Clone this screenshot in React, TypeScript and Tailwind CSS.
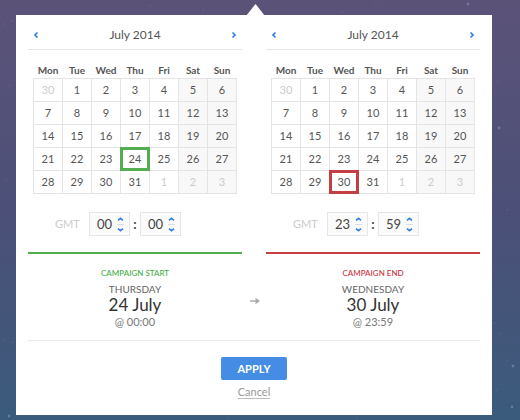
import { useState } from "react";

type Tone = "start" | "end";

const WEEKDAYS = ["Mon", "Tue", "Wed", "Thu", "Fri", "Sat", "Sun"];

// Day 0 stands for the last day of June, days above 31 fall in August.
const WEEKS = [0, 1, 2, 3, 4].map((week) => WEEKDAYS.map((_, day) => week * 7 + day));

const STARS = [
  [4, 24, 1], [12, 21, 1], [203, 10, 1], [150, 6, 1], [342, 12, 1], [376, 6, 1], [468, 4, 2],
  [498, 82, 1], [499, 128, 2], [10, 86, 1], [6, 180, 1], [507, 210, 1], [494, 323, 1],
  [500, 334, 1], [507, 361, 1], [513, 366, 2], [497, 390, 1], [512, 407, 2], [9, 416, 2],
  [4, 340, 1], [357, 417, 1], [228, 418, 1], [13, 342, 1],
];

function dayLabel(day: number) {
  if (day < 1) return 30;
  return day > 31 ? day - 31 : day;
}

function Chevron({ className, path }: { className: string; path: string }) {
  return (
    <svg viewBox="0 0 6 8" className={className} fill="none" stroke="#2f80e8" strokeWidth="1.7" aria-hidden="true">
      <path d={path} />
    </svg>
  );
}

function MonthHeader() {
  return (
    <div className="flex h-[35px] items-center justify-between border-b border-[#e6e6e6] px-[5px] pt-[6px]">
      <button type="button" aria-label="Previous month" className="flex">
        <Chevron className="h-2 w-[6px]" path="M4.500 1.500 2 4l2.500 2.500" />
      </button>
      <h2 className="text-[12px] leading-4 text-[#555]">July 2014</h2>
      <button type="button" aria-label="Next month" className="flex">
        <Chevron className="h-2 w-[6px]" path="M1.500 1.500 4 4 1.500 6.500" />
      </button>
    </div>
  );
}

function MonthTable({ tone, selected, onSelect }: { tone: Tone; selected: number; onSelect: (day: number) => void }) {
  const ring = tone === "start" ? "outline-[#52ae50]" : "outline-[#c43f42]";
  return (
    <div className="px-[5px] pt-3">
      <table className="w-full table-fixed border-collapse text-center">
        <thead>
          <tr>
            {WEEKDAYS.map((name) => (
              <th key={name} scope="col" className="h-4 p-0 text-[10px] leading-4 font-bold text-[#555]">
                {name}
              </th>
            ))}
          </tr>
        </thead>
        <tbody>
          {WEEKS.map((week, row) => (
            <tr key={row}>
              {week.map((day, column) => (
                <td key={day} className={`h-[23px] border border-[#e4e4e4] p-0 ${column > 4 ? "bg-[#f8f8f8]" : ""}`}>
                  <button
                    type="button"
                    onClick={() => onSelect(day)}
                    className={`block h-[22px] w-full text-[11px] leading-[22px] ${
                      day < 1 || day > 31 ? "text-[#ccc]" : "text-[#555]"
                    } ${day === selected ? `outline-3 -outline-offset-2 outline-solid ${ring}` : ""}`}
                  >
                    {dayLabel(day)}
                  </button>
                </td>
              ))}
            </tr>
          ))}
        </tbody>
      </table>
    </div>
  );
}

function Stepper({ label, value, max, onChange }: { label: string; value: number; max: number; onChange: (value: number) => void }) {
  const size = max + 1;
  return (
    <div className="flex h-6 w-[41px] items-center border border-[#e6e6e6] bg-[#fbfbfb] pr-[5px]">
      <input
        type="text"
        aria-label={label}
        value={String(value).padStart(2, "0")}
        onChange={(event) => onChange((Number(event.target.value) || 0) % size)}
        className="w-0 min-w-0 flex-1 bg-transparent pl-[7px] text-[13px] leading-5 text-[#444] outline-none"
      />
      <div className="flex w-[7px] flex-col items-center gap-[3px]">
        <button type="button" aria-label={`${label} up`} className="flex" onClick={() => onChange((value + 1) % size)}>
          <svg viewBox="0 0 7 4" className="h-1 w-[7px]" fill="none" stroke="#2f80e8" strokeWidth="1.6" aria-hidden="true">
            <path d="M1 3.300 3.500 1.300 6 3.300" />
          </svg>
        </button>
        <span className="h-px w-[7px] bg-[#dedede]" />
        <button type="button" aria-label={`${label} down`} className="flex" onClick={() => onChange((value + size - 1) % size)}>
          <svg viewBox="0 0 7 4" className="h-1 w-[7px]" fill="none" stroke="#2f80e8" strokeWidth="1.6" aria-hidden="true">
            <path d="M1 .7 3.500 2.700 6 .7" />
          </svg>
        </button>
      </div>
    </div>
  );
}

function TimeRow({ name, hours, minutes, onHours, onMinutes }: {
  name: string;
  hours: number;
  minutes: number;
  onHours: (value: number) => void;
  onMinutes: (value: number) => void;
}) {
  return (
    <div className="flex items-center pt-[18px] pb-4 pl-[27px]">
      <span className="w-[34px] text-[11px] leading-4 text-[#ccc]">GMT</span>
      <Stepper label={`${name} hours`} value={hours} max={23} onChange={onHours} />
      <span className="w-[10px] text-center text-[13px] leading-4 font-bold text-[#444]">:</span>
      <Stepper label={`${name} minutes`} value={minutes} max={59} onChange={onMinutes} />
    </div>
  );
}

const NAMES = ["MONDAY", "TUESDAY", "WEDNESDAY", "THURSDAY", "FRIDAY", "SATURDAY", "SUNDAY"];

function DatePanel({ tone, title, initialDay, initialHours, initialMinutes }: {
  tone: Tone;
  title: string;
  initialDay: number;
  initialHours: number;
  initialMinutes: number;
}) {
  const [day, setDay] = useState(initialDay);
  const [hours, setHours] = useState(initialHours);
  const [minutes, setMinutes] = useState(initialMinutes);
  const month = day < 1 ? "June" : day > 31 ? "August" : "July";
  const time = `${String(hours).padStart(2, "0")}:${String(minutes).padStart(2, "0")}`;
  return (
    <section className="min-w-0 flex-1">
      <MonthHeader />
      <MonthTable tone={tone} selected={day} onSelect={setDay} />
      <TimeRow name={title} hours={hours} minutes={minutes} onHours={setHours} onMinutes={setMinutes} />
      <div
        className={`flex flex-col items-center border-t-2 pt-[13px] pb-[11px] text-center ${
          tone === "start" ? "border-[#52ae50]" : "border-[#c43f42]"
        }`}
      >
        <h3 className={`text-[8px] leading-3 font-medium ${tone === "start" ? "text-[#45ad45]" : "text-[#c8323a]"}`}>{title}</h3>
        <p className="pt-1 text-[10px] leading-3 text-[#666]">{NAMES[day % 7]}</p>
        <p className="text-[17px] leading-5 text-[#333]">{`${dayLabel(day)} ${month}`}</p>
        <p className="text-[11px] leading-[14px] text-[#777]">{`@ ${time}`}</p>
      </div>
    </section>
  );
}

export default function App() {
  return (
    <main className="relative min-h-screen overflow-hidden bg-linear-to-b from-[#5b5278] via-[#4c5078] to-[#3a5b7c] pt-[15px] pr-7 pb-[5px] pl-4 font-['Lato','Open_Sans',sans-serif]">
      <svg className="absolute inset-0 h-full w-full" aria-hidden="true">
        {STARS.map(([x, y, size]) => (
          <circle key={`${x}-${y}`} cx={x} cy={y} r={size * 0.7} fill="#8fb4dc" opacity={size > 1 ? 0.4 : 0.25} />
        ))}
      </svg>
      <div className="relative bg-white px-3">
        <svg viewBox="0 0 20 12" className="absolute -top-[11px] left-1/2 h-3 w-5 -translate-x-2" aria-hidden="true">
          <path d="M0 12 9.500 0 19 12z" fill="#fff" />
        </svg>
        <div className="relative flex gap-6">
          <DatePanel tone="start" title="CAMPAIGN START" initialDay={24} initialHours={0} initialMinutes={0} />
          <DatePanel tone="end" title="CAMPAIGN END" initialDay={30} initialHours={23} initialMinutes={59} />
          <svg viewBox="0 0 10 8" className="absolute bottom-[35px] left-1/2 h-2 w-[10px] -translate-x-1" aria-hidden="true">
            <path d="M0 3.200h5.500V.8L10 4 5.500 7.200V4.800H0z" fill="#aaa" />
          </svg>
        </div>
        <div className="flex flex-col items-center gap-[6px] border-t border-[#e8e8e8] pt-4 pb-4">
          <button type="button" className="h-[23px] w-[66px] rounded-[2px] bg-[#458ce4] text-[11px] leading-4 font-bold text-white">
            APPLY
          </button>
          <button type="button" className="border-b border-[#bbb] text-[11px] leading-3 text-[#999]">
            Cancel
          </button>
        </div>
      </div>
    </main>
  );
}
